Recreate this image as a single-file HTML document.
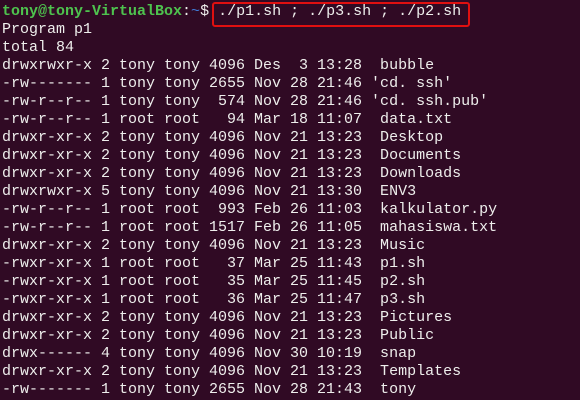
<!DOCTYPE html>
<html><head><style>
html,body{margin:0;padding:0;background:#300a24;width:580px;height:400px;overflow:hidden}
pre{margin:0;padding:3px 0 0 2px;font-family:"Liberation Mono",monospace;font-size:15px;line-height:18px;color:#eeeeec}
.g{font-weight:bold;color:#4ec24e}
.b{color:#3f7ad6}
.box{position:absolute;left:212px;top:2px;width:254px;height:21px;border:2.5px solid #e01010;border-radius:3px}
</style></head><body>
<div class="box"></div>
<pre><span class="g">tony@tony-VirtualBox</span>:<span class="b">~</span>$ ./p1.sh ; ./p3.sh ; ./p2.sh
Program p1
total 84
drwxrwxr-x 2 tony tony 4096 Des  3 13:28  bubble
-rw------- 1 tony tony 2655 Nov 28 21:46 'cd. ssh'
-rw-r--r-- 1 tony tony  574 Nov 28 21:46 'cd. ssh.pub'
-rw-r--r-- 1 root root   94 Mar 18 11:07  data.txt
drwxr-xr-x 2 tony tony 4096 Nov 21 13:23  Desktop
drwxr-xr-x 2 tony tony 4096 Nov 21 13:23  Documents
drwxr-xr-x 2 tony tony 4096 Nov 21 13:23  Downloads
drwxrwxr-x 5 tony tony 4096 Nov 21 13:30  ENV3
-rw-r--r-- 1 root root  993 Feb 26 11:03  kalkulator.py
-rw-r--r-- 1 root root 1517 Feb 26 11:05  mahasiswa.txt
drwxr-xr-x 2 tony tony 4096 Nov 21 13:23  Music
-rwxr-xr-x 1 root root   37 Mar 25 11:43  p1.sh
-rwxr-xr-x 1 root root   35 Mar 25 11:45  p2.sh
-rwxr-xr-x 1 root root   36 Mar 25 11:47  p3.sh
drwxr-xr-x 2 tony tony 4096 Nov 21 13:23  Pictures
drwxr-xr-x 2 tony tony 4096 Nov 21 13:23  Public
drwx------ 4 tony tony 4096 Nov 30 10:19  snap
drwxr-xr-x 2 tony tony 4096 Nov 21 13:23  Templates
-rw------- 1 tony tony 2655 Nov 28 21:43  tony
</pre>
</body></html>
